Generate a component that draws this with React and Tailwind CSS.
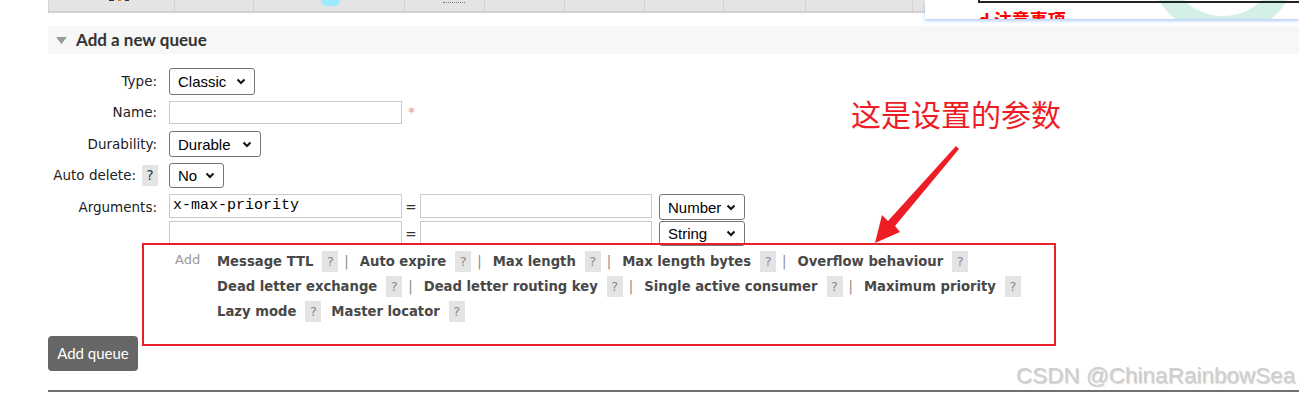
import React from 'react';

const Chevron = () => (
  <svg width="10" height="7" viewBox="0 0 10 7" className="shrink-0">
    <path d="M1.5 1.5 L5 5 L8.5 1.5" fill="none" stroke="#111" strokeWidth="2" />
  </svg>
);

const Select = ({ label, className }) => (
  <div
    className={`flex items-center justify-between rounded-[3px] border border-[#767676] bg-white pl-[8px] pr-[8px] font-['Liberation_Sans',Arial,sans-serif] text-[15px] text-black ${className}`}
  >
    <span className="leading-none">{label}</span>
    <Chevron />
  </div>
);

const Help = ({ className = '' }) => (
  <span
    className={`inline-flex h-[21px] w-[16px] shrink-0 items-center justify-center bg-[#e4e4e4] text-[13px] font-normal ${className}`}
  >
    ?
  </span>
);

const Option = ({ label, sep = true, first = false, afterBare = false }) => (
  <>
    <span className={first ? '' : afterBare ? 'ml-[10px]' : 'ml-[11px]'}>{label}</span>
    <Help className="ml-[9px] text-[#8a8a8a]" />
    {sep && <span className="ml-[6px] font-normal text-[#8a8a8a]">|</span>}
  </>
);

const cells = [126, 79, 151, 80, 80, 80, 79, 82, 107, 200];

export default function App() {
  return (
    <div className="relative h-[395px] w-[1299px] overflow-hidden bg-white font-['DejaVu_Sans',Verdana,sans-serif]">
      {/* bottom edge of the table above */}
      <div className="ml-[48px] flex h-[13px] border-b-2 border-l border-[#d2d2d2] bg-[#e4e4e4]">
        {cells.map((w, i) => (
          <div key={i} className="h-[11px] shrink-0 border-r border-[#d2d2d2]" style={{ width: w }}>
            {i === 0 && (
              <div className="ml-[60px] flex gap-[4px]">
                <div className="h-[1px] w-[5px] bg-[#333]" />
                <div className="h-[1px] w-[3px] bg-[#c70]" />
                <div className="h-[1px] w-[4px] bg-[#333]" />
              </div>
            )}
            {i === 2 && <div className="ml-[67px] h-[6px] w-[19px] rounded-b-[5px] bg-[#9fe9ff]" />}
            {i === 3 && <div className="ml-[38px] mt-[1px] h-[2px] w-[22px] border-b border-dotted border-[#777]" />}
          </div>
        ))}
      </div>

      {/* section header */}
      <div className="ml-[48px] mt-[13px] flex h-[28px] items-center bg-[#f7f7f7] pl-[8px]">
        <svg width="11" height="7" viewBox="0 0 11 7">
          <polygon points="0,0 11,0 5.5,7" fill="#9a9a9a" />
        </svg>
        <span className="ml-[9px] font-['Lato',sans-serif] text-[17px] font-bold text-[#333]">Add a new queue</span>
      </div>

      {/* form */}
      <div className="ml-[48px] text-[13.5px] text-[#222]">
        <div className="mt-[14px] flex h-[27px] items-center">
          <div className="w-[121px] pr-[12px] text-right">Type:</div>
          <Select label="Classic" className="h-[27px] w-[86px]" />
        </div>

        <div className="mt-[6px] flex h-[23px] items-center">
          <div className="w-[121px] pr-[12px] text-right">Name:</div>
          <div className="h-[23px] w-[233px] border border-[#cacaca] bg-white" />
          <span className="ml-[6px] text-[14px] text-[#f58a8a]">*</span>
        </div>

        <div className="mt-[7px] flex h-[26px] items-center">
          <div className="w-[121px] pr-[12px] text-right">Durability:</div>
          <Select label="Durable" className="h-[26px] w-[92px]" />
        </div>

        <div className="mt-[6px] flex h-[25px] items-center">
          <div className="flex w-[121px] items-center justify-end pr-[11px]">
            <span>Auto delete:</span>
            <Help className="ml-[6px] text-[14px] text-[#333]" />
          </div>
          <Select label="No" className="h-[25px] w-[55px]" />
        </div>

        <div className="mt-[6px] flex h-[26px] items-start">
          <div className="flex h-[26px] w-[121px] items-center justify-end pr-[12px]">Arguments:</div>
          <div className="flex h-[24px] w-[233px] items-center border border-[#cacaca] bg-white pl-[3px] font-['Liberation_Mono',monospace] text-[15px] text-black">
            x-max-priority
          </div>
          <span className="mt-[3px] w-[18px] text-center text-[#333]">=</span>
          <div className="h-[24px] w-[232px] border border-[#cacaca] bg-white" />
          <Select label="Number" className="ml-[7px] h-[26px] w-[86px]" />
        </div>

        <div className="mt-[1px] flex h-[25px] items-start">
          <div className="w-[121px]" />
          <div className="h-[23px] w-[233px] border border-[#cacaca] bg-white" />
          <span className="mt-[3px] w-[18px] text-center text-[#333]">=</span>
          <div className="h-[23px] w-[232px] border border-[#cacaca] bg-white" />
          <Select label="String" className="ml-[7px] h-[25px] w-[86px]" />
        </div>

        {/* add argument shortcuts */}
        <div className="mt-[3px] flex">
          <div className="w-[127px]" />
          <div className="w-[42px] pt-[2px] text-[13px] leading-[18px] text-[#999]">Add</div>
          <div className="text-[13.2px] font-bold text-[#484848]">
            <div className="flex h-[25px] items-center">
              <Option label="Message TTL" first />
              <Option label="Auto expire" />
              <Option label="Max length" />
              <Option label="Max length bytes" />
              <Option label="Overflow behaviour" sep={false} />
            </div>
            <div className="flex h-[25px] items-center">
              <Option label="Dead letter exchange" first />
              <Option label="Dead letter routing key" />
              <Option label="Single active consumer" />
              <Option label="Maximum priority" sep={false} />
            </div>
            <div className="flex h-[25px] items-center">
              <Option label="Lazy mode" first sep={false} />
              <Option label="Master locator" sep={false} afterBare />
            </div>
          </div>
        </div>

        <button className="mt-[12px] flex h-[35px] w-[90px] items-center justify-center rounded-[4px] bg-[#666] font-['Lato',sans-serif] text-[15px] text-white">
          Add queue
        </button>

        <div className="mt-[19px] h-[2px] bg-[#707070]" />
      </div>

      {/* popup edge at top right */}
      <div className="absolute right-0 top-0 h-[19px] w-[374px] overflow-hidden bg-white shadow-[0_2px_3px_rgba(90,150,235,0.45)]">
        <svg className="absolute left-0 top-0" width="374" height="19">
          <circle cx="298" cy="-40" r="76" fill="#d4efe8" />
          <circle cx="298" cy="-40" r="56" fill="#ffffff" />
        </svg>
        <div className="absolute left-[53px] right-0 top-0 h-[3px] border-b-2 border-l-2 border-[#222]" />
        <div className="absolute left-[53px] top-[10px] font-['Noto_Sans_CJK_SC',sans-serif] text-[18px] font-bold leading-none text-[#f00]">
          d 注意事项
        </div>
      </div>

      {/* annotation */}
      <div className="pointer-events-none absolute left-[142px] top-[243px] h-[103px] w-[914px] border-2 border-[#e6212b]" />
      <div className="pointer-events-none absolute left-[851px] top-[98px] font-['Noto_Sans_CJK_SC',sans-serif] text-[30px] leading-none text-[#ee1c25]">
        这是设置的参数
      </div>
      <svg className="pointer-events-none absolute left-0 top-0" width="1299" height="395">
        <polygon points="956,146 959,149 895,226 900,232 875,243 882,215 888,221" fill="#ee1c25" />
      </svg>

      {/* watermark */}
      <div className="pointer-events-none absolute left-[1016px] top-[359px] font-['Liberation_Sans',Arial,sans-serif] text-[22.5px] text-[#cfcfcf] [text-shadow:1px_1px_1px_rgba(0,0,0,0.18)]">
        CSDN @ChinaRainbowSea
      </div>
    </div>
  );
}
